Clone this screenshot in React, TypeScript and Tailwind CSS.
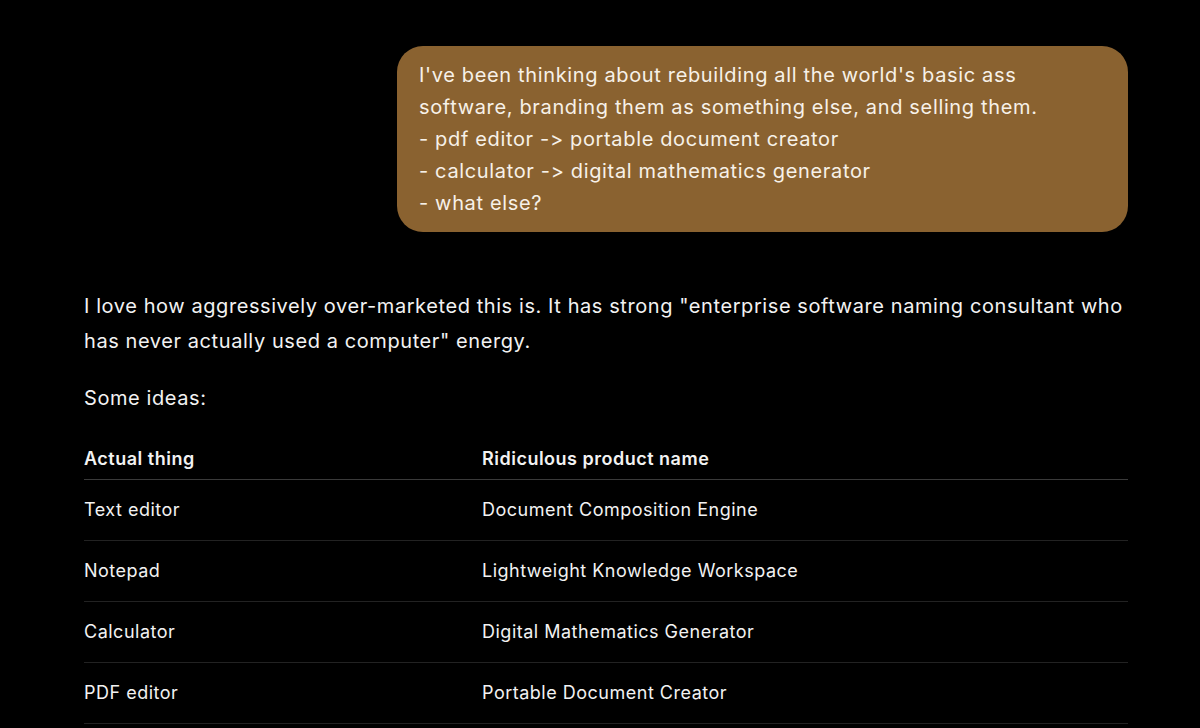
import React from 'react';

const rows = [
  ['Text editor', 'Document Composition Engine'],
  ['Notepad', 'Lightweight Knowledge Workspace'],
  ['Calculator', 'Digital Mathematics Generator'],
  ['PDF editor', 'Portable Document Creator'],
];

const App: React.FC = () => {
  return (
    <div className="min-h-screen bg-black text-[#f2f2f2] font-['Inter',sans-serif] [font-feature-settings:'calt'_0,'liga'_0] pl-[84px] pr-[72px] pt-[46px] overflow-hidden">
      <div className="flex justify-end">
        <div className="w-[731px] rounded-[26px] bg-[#8a6230] pl-[22px] pr-[56px] py-[13px] text-[20px] leading-[32px] tracking-[0.65px] text-[#f7f1e8]">
          <p>I've been thinking about rebuilding all the world's basic ass software, branding them as something else, and selling them.</p>
          <p>- pdf editor -&gt; portable document creator</p>
          <p>- calculator -&gt; digital mathematics generator</p>
          <p>- what else?</p>
        </div>
      </div>

      <p className="mt-[57px] text-[20px] leading-[35px] tracking-[0.58px]">
        I love how aggressively over-marketed this is. It has strong "enterprise software naming consultant who has never actually used a computer" energy.
      </p>
      <p className="mt-[22px] text-[20px] leading-[35px] tracking-[0.58px]">Some ideas:</p>

      <table className="mt-[29px] w-full text-[18px] leading-[28px] tracking-[0.5px] border-collapse">
        <thead>
          <tr className="border-b border-[#3a3a3a]">
            <th className="w-[398px] pb-[6px] text-left font-semibold">Actual thing</th>
            <th className="pb-[6px] text-left font-semibold">Ridiculous product name</th>
          </tr>
        </thead>
        <tbody>
          {rows.map(([a, b]) => (
            <tr key={a} className="border-b border-[#222222]">
              <td className="py-4">{a}</td>
              <td className="py-4">{b}</td>
            </tr>
          ))}
        </tbody>
      </table>
    </div>
  );
};

export default App;
